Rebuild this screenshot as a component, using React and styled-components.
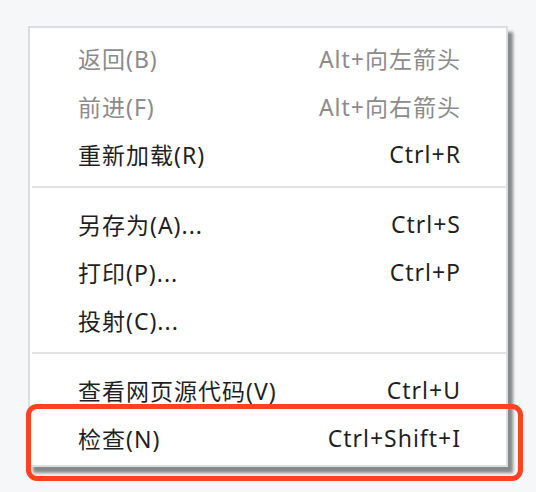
import React from "react";
import styled, { createGlobalStyle } from "styled-components";

const Global = createGlobalStyle`
  html, body { margin: 0; padding: 0; background: #f6f7f9; }
  body { width: 536px; height: 492px; overflow: hidden; }
`;

const Page = styled.div`
  position: relative;
  width: 536px;
  height: 492px;
  padding: 26px 0 0 28px;
  box-sizing: border-box;
`;

const Menu = styled.div`
  width: 480px;
  box-sizing: border-box;
  background: #ffffff;
  border: 2px solid #dcdde1;
  padding: 6px 45px 3px 48px;
  box-shadow: 5px 6px 3px rgba(0, 0, 0, 0.45);
  font-family: "Noto Sans", "Noto Sans CJK SC", sans-serif;
  font-size: 23px;
  letter-spacing: 1px;
`;

const Section = styled.div`
  display: flex;
  flex-direction: column;
`;

const Item = styled.div`
  display: flex;
  align-items: center;
  justify-content: space-between;
  height: 48px;
  color: ${(p) => (p.$disabled ? "#8b8b8b" : "#1f1f1f")};
  padding-bottom: 1px;
  box-sizing: border-box;
`;

const Label = styled.span`
  white-space: nowrap;
`;

const Shortcut = styled.span`
  white-space: nowrap;
`;

const Separator = styled.div`
  height: 2px;
  background: #e1e2e6;
  margin: 8px -45px 12px -46px;
`;

const Highlight = styled.div`
  position: absolute;
  left: 26px;
  top: 404px;
  width: 497px;
  height: 77px;
  box-sizing: border-box;
  border: 5px solid #fd4122;
  border-radius: 11px;
  pointer-events: none;
`;

const sections = [
  [
    { label: "返回(B)", key: "Alt+向左箭头", disabled: true },
    { label: "前进(F)", key: "Alt+向右箭头", disabled: true },
    { label: "重新加载(R)", key: "Ctrl+R" },
  ],
  [
    { label: "另存为(A)...", key: "Ctrl+S" },
    { label: "打印(P)...", key: "Ctrl+P" },
    { label: "投射(C)...", key: "" },
  ],
  [
    { label: "查看网页源代码(V)", key: "Ctrl+U" },
    { label: "检查(N)", key: "Ctrl+Shift+I" },
  ],
];

export default function App() {
  return (
    <Page>
      <Global />
      <Menu>
        {sections.map((items, i) => (
          <React.Fragment key={i}>
            {i > 0 && <Separator />}
            <Section>
              {items.map((it) => (
                <Item key={it.label} $disabled={it.disabled}>
                  <Label>{it.label}</Label>
                  <Shortcut>{it.key}</Shortcut>
                </Item>
              ))}
            </Section>
          </React.Fragment>
        ))}
      </Menu>
      <Highlight />
    </Page>
  );
}
